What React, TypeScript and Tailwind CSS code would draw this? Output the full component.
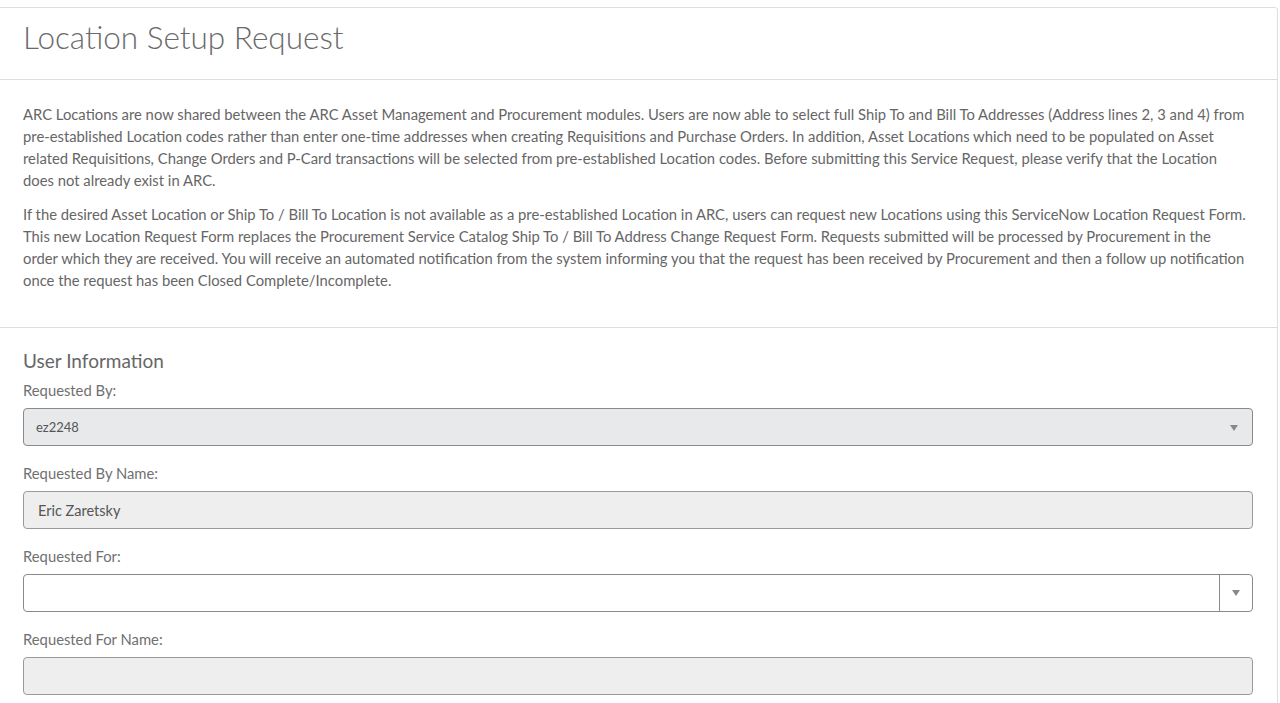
// Formulário de solicitação de local — cabeçalho, texto explicativo e bloco "User Information"
const font = { fontFamily: 'Lato, "Noto Sans", sans-serif' }

const intro = [
  'ARC Locations are now shared between the ARC Asset Management and Procurement modules. Users are now able to select full Ship To and Bill To Addresses (Address lines 2, 3 and 4) from',
  'pre-established Location codes rather than enter one-time addresses when creating Requisitions and Purchase Orders. In addition, Asset Locations which need to be populated on Asset',
  'related Requisitions, Change Orders and P-Card transactions will be selected from pre-established Location codes. Before submitting this Service Request, please verify that the Location',
  'does not already exist in ARC.',
]

const detail = [
  'If the desired Asset Location or Ship To / Bill To Location is not available as a pre-established Location in ARC, users can request new Locations using this ServiceNow Location Request Form.',
  'This new Location Request Form replaces the Procurement Service Catalog Ship To / Bill To Address Change Request Form. Requests submitted will be processed by Procurement in the',
  'order which they are received. You will receive an automated notification from the system informing you that the request has been received by Procurement and then a follow up notification',
  'once the request has been Closed Complete/Incomplete.',
]

function Caret() {
  return (
    <svg width="8" height="6" viewBox="0 0 8 6" className="text-[#888]">
      <path d="M0 0 L8 0 L4 6 Z" fill="currentColor" />
    </svg>
  )
}

function Label({ children }: { children: React.ReactNode }) {
  return <div className="text-[14.8px] leading-5 text-[#707070]">{children}</div>
}

export default function App() {
  return (
    <div className="h-[703px] overflow-hidden bg-white pt-[7px]" style={font}>
      <div className="ml-[-1px] w-[1279px] rounded-tr-[3px] border border-[#dedede] bg-white pb-[60px]">
        {/* Cabeçalho */}
        <div className="h-[72px] border-b border-[#dedede] pl-[23px] pt-[9px]">
          <h1 className="text-[31.5px] font-light leading-10 text-[#6a6a6a]">Location Setup Request</h1>
        </div>

        {/* Texto explicativo */}
        <div className="border-b border-[#dedede] pb-[36px] pl-[23px] pr-[10px] pt-[23px] text-[14.8px] leading-[22px] text-[#666]">
          <p>
            {intro.map((l) => (
              <span key={l} className="block whitespace-nowrap">
                {l}
              </span>
            ))}
          </p>
          <p className="mt-[12px]">
            {detail.map((l) => (
              <span key={l} className="block whitespace-nowrap">
                {l}
              </span>
            ))}
          </p>
        </div>

        {/* User Information */}
        <div className="pl-[23px] pr-[24px] pt-[21px]">
          <h2 className="text-[19px] leading-6 text-[#666]">User Information</h2>

          <div className="mt-[7px]">
            <Label>Requested By:</Label>
            <div className="mt-[8px] flex h-[38px] items-center justify-between rounded-[4px] border border-[#8a8a8a] bg-[#e8e9eb] pl-[12px] pr-[14px] pt-[2px]">
              <span className="text-[13px] text-[#555]">ez2248</span>
              <Caret />
            </div>
          </div>

          <div className="mt-[17px]">
            <Label>Requested By Name:</Label>
            <div className="mt-[8px] flex h-[38px] items-center rounded-[4px] border border-[#9a9a9a] bg-[#eeeeee] pl-[14px] pt-[1px]">
              <span className="text-[14.5px] text-[#555]">Eric Zaretsky</span>
            </div>
          </div>

          <div className="mt-[17px]">
            <Label>Requested For:</Label>
            <div className="mt-[8px] flex h-[38px] rounded-[4px] border border-[#8a8a8a] bg-white">
              <div className="flex-1" />
              <div className="flex w-[33px] items-center justify-center border-l border-[#8a8a8a]">
                <Caret />
              </div>
            </div>
          </div>

          <div className="mt-[17px]">
            <Label>Requested For Name:</Label>
            <div className="mt-[8px] h-[38px] rounded-[4px] border border-[#9a9a9a] bg-[#eeeeee]" />
          </div>
        </div>
      </div>
    </div>
  )
}
